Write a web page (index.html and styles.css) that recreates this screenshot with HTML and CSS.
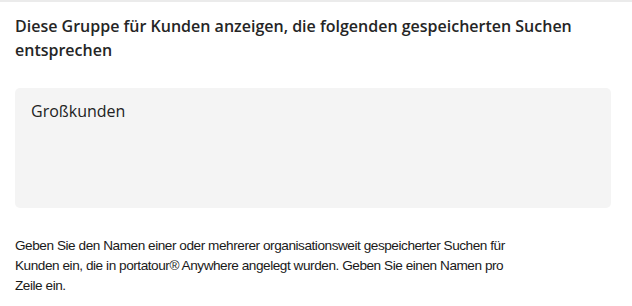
FILE: index.html
```html
<html>
<head>
	<title>Gruppe</title>
	<link rel="stylesheet" href="styles.css">
</head>
<body>

<div class="panel">
	<div class="title">Diese Gruppe für Kunden anzeigen, die folgenden gespeicherten Suchen entsprechen</div>

	<div class="searches">Großkunden</div>

	<div class="hint">Geben Sie den Namen einer oder mehrerer organisationsweit gespeicherter Suchen für Kunden ein, die in portatour® Anywhere angelegt wurden. Geben Sie einen Namen pro Zeile ein.</div>
</div>

</body>
</html>
```

FILE: styles.css
```css
body {
	margin: 0;
	background: #fff;
	color: #222;
}

div.panel {
	border-top: 2px solid #ebebeb;
	padding: 12px 21px 0 15px;
}

div.title {
	font-family: "Open Sans", sans-serif;
	font-weight: 600;
	font-size: 16px;
	line-height: 24px;
	color: #252525;
}

div.searches {
	margin-top: 26px;
	height: 120px;
	box-sizing: border-box;
	padding: 10px 16px;
	border-radius: 5px;
	background-color: #f4f4f4;
	font-family: "Open Sans", sans-serif;
	font-size: 16px;
	line-height: 26px;
	color: #222;
}

div.hint {
	max-width: 500px;
	margin-top: 28px;
	font-family: "Liberation Sans", Arial, sans-serif;
	font-size: 13.6px;
	letter-spacing: -0.45px;
	line-height: 20px;
	color: #1a1a1a;
}
```
